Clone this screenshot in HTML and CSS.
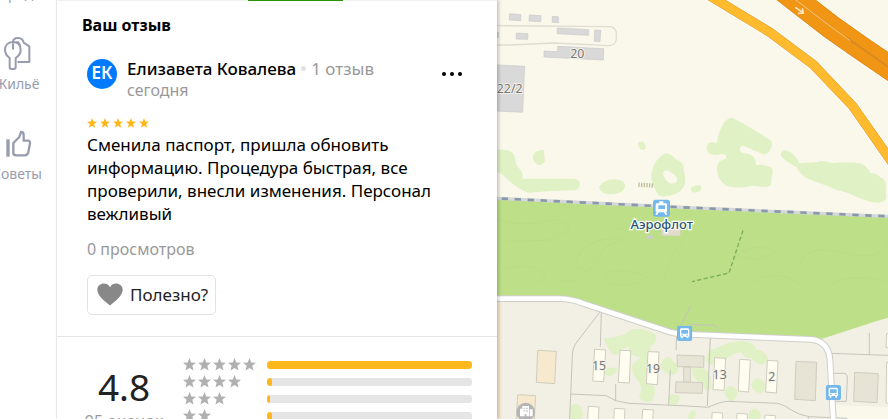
FILE: index.html
```html
<!DOCTYPE html>
<html lang="ru">
<head>
<meta charset="utf-8">
<title>Ваш отзыв</title>
<link rel="stylesheet" href="styles.css">
</head>
<body>
<svg class="defs" aria-hidden="true">
  <symbol id="star" viewBox="0 0 24 24"><path d="M12 0l3.300 8.400 8.700.4-6.800 5.600 2.300 8.800L12 18.300l-7.500 4.900 2.300-8.800L0 8.800l8.700-.4z"/></symbol>
  <symbol id="bus" viewBox="0 0 46 46"><rect width="46" height="46" rx="7" fill="#75b8ec"/><path fill="#fff" fill-rule="evenodd" d="M13 8h20q4 0 4 5v20h-3v5h-5v-5H17v5h-5v-5H9V13q0-5 4-5zm0 5v11h20V13zm0 14v3h5v-3zm15 0v3h5v-3z"/></symbol>
</svg>
<div class="app">
  <nav class="rail">
    <a class="rail-item" href="#"><span>Города</span></a>
    <a class="rail-item" href="#">
      <svg class="rail-icon" viewBox="0 0 96 108" fill="none" stroke="#989caf" stroke-width="6" stroke-linejoin="round" stroke-linecap="round"><path d="M36 23C38 8 65 8 68 26L85 37V84H52"/><path d="M36 24C20 24 12 35 12 48c0 12 6 18 14 24v27q0 6 6 6h6q6 0 6-6V72c9-6 15-12 15-24 0-15-8-24-23-24z"/><path d="M36 30v14M50 24q4 4 7 10"/></svg>
      <span>Жильё</span>
    </a>
    <a class="rail-item" href="#">
      <svg class="rail-icon" viewBox="0 0 96 108" fill="none" stroke="#989caf" stroke-width="7" stroke-linejoin="round"><path d="M21 46v52" stroke-width="10"/><path d="M37 87V57l18-18 5-15q8 0 8 9v17h13q7 0 6 8l-5 27q-2 9-11 9H46q-9 0-9-7z"/></svg>
      <span>Советы</span>
    </a>
  </nav>
  <main class="panel">
    <div class="tabs"><div class="tab-active"></div></div>
    <section class="review">
      <h2>Ваш отзыв</h2>
      <article class="card">
        <header class="author">
          <div class="avatar">ЕК</div>
          <div class="who">
            <div class="name-line"><a class="name" href="#">Елизавета Ковалева</a><i class="dot"></i><span class="muted">1 отзыв</span></div>
            <div class="date">сегодня</div>
          </div>
          <button class="more" type="button" aria-label="Ещё"><i></i><i></i><i></i></button>
        </header>
        <div class="stars">
          <svg><use href="#star"/></svg><svg><use href="#star"/></svg><svg><use href="#star"/></svg><svg><use href="#star"/></svg><svg><use href="#star"/></svg>
        </div>
        <p class="text">Сменила паспорт, пришла обновить информацию. Процедура быстрая, все проверили, внесли изменения. Персонал вежливый</p>
        <div class="views">0 просмотров</div>
        <button class="useful" type="button">
          <svg viewBox="0 0 78 68"><path fill="#888" d="M39 67C25 56 1 39 1 20 1 0 29-6 39 12 49-6 77 0 77 20c0 19-24 36-38 47z"/></svg>
          Полезно?
        </button>
      </article>
    </section>
    <section class="rating">
      <div class="score"><div class="value">4.8</div><div class="count">95 оценок</div></div>
      <div class="rows">
        <div class="row"><div class="row-stars"><svg><use href="#star"/></svg><svg><use href="#star"/></svg><svg><use href="#star"/></svg><svg><use href="#star"/></svg><svg><use href="#star"/></svg></div><div class="bar"><div style="width:100%"></div></div></div>
        <div class="row"><div class="row-stars"><svg><use href="#star"/></svg><svg><use href="#star"/></svg><svg><use href="#star"/></svg><svg><use href="#star"/></svg></div><div class="bar"><div style="width:2.5%"></div></div></div>
        <div class="row"><div class="row-stars"><svg><use href="#star"/></svg><svg><use href="#star"/></svg><svg><use href="#star"/></svg></div><div class="bar"><div style="width:1.5%"></div></div></div>
        <div class="row"><div class="row-stars"><svg><use href="#star"/></svg><svg><use href="#star"/></svg></div><div class="bar"><div style="width:2.5%"></div></div></div>
      </div>
    </section>
  </main>
  <div class="map">
    <svg viewBox="21 0 1173 1257" preserveAspectRatio="xMinYMin slice" role="img" aria-label="Карта">
      <rect x="21" width="1173" height="1257" fill="#faf8ea"/>
      <!-- residential land -->
      <path fill="#f2f0e4" d="M21 890H600L964 1010 1154 965 1194 953V1222L1034 1214 1036 1257H21z"/>
      <path fill="#f5ecd4" d="M21 905h14v352H21z"/>
      <!-- forest -->
      <path fill="#bddf88" d="M21 597L600 623 1194 650V953L1154 965 994 1017 964 1018 600 1003 550 997 270 905 210 897 21 893z"/>
      <g fill="none" stroke="#b3d77e" stroke-width="3" opacity=".4">
        <path d="M30 660q60 20 130 5t80 25l-60 30-130 5M40 810q70-25 110 0t-20 40M190 860q50-40 90 0M255 800q10-60 60-75t90-10q-60 20-70 40t-40 60zM345 820q60-20 130 10-50 40-120 20zM370 690q100-20 180 20M520 850q20-90 60-130M740 765q60-40 120-10-60 40-120 10zM930 790q20-60 140-30t120-50M780 850q100-60 180 30M1010 860q90-50 180-10"/>
      </g>
      <!-- light greenery -->
      <g fill="#e1f1c6">
        <path d="M21 449q50-5 54 25 0 20 17 37 10 15 5 25h155q20 4 17 17 0 15-15 18-60 1-140 7Q75 565 37 523L21 517zM130 465q5-15 32-15 0 20 3 35-10 12-20 10-20-10-15-30zM327 560q20-30 62-20 17 5 16 20-5 20-40 23-35 0-38-23zM444 430q6-10 16-4 10 12 6 20-8 8-15 1-8-8-7-17z"/>
        <path fill-rule="evenodd" d="M484 520q10-45 42-60 18 0 30 17 28 10 25 30 10 40 0 54-15 25-60 29-20 0-25-22-15-20-12-48zm36 5q-4-15 15-13 30 15 26 30-5 12-22 8-15-10-19-25z"/>
        <path d="M602 566q8-13 29-10 8 7-1 18-24 10-28-8zM650 445q0-24 30-16 15-75 46-76 16 5 116 68 8 8 0 25-7 19-24 16l-48-20q-16-10-20 2-2 12 10 16 38 0 38 36 18-6 43 5 10 5 6 20-5 20-3 32-5 10-30 8-20-5-30-3-50 10-78-2-32-25-23-65 8-12 25-15 4-15-13-14-45 10-45-17zM872 462q7-21 34-3 18 18 21 31l55-4q10-8 46 3 60-5 88 3 20 12 24 27 20 0 30 12 25 10 17 45 8 30-20 32-35 0-95-30-30-5-60-20-30-10-65-25-20-15-28-32-49-25-47-39zM1125 600h60q-30 15-60 0z"/>
        <path d="M341 1015q50 0 80-25 40-12 77 15 5 23-18 35 8 20-10 35-20-5-40-8-13-7-13-25-20 0-30 15-20 28-46-42zM344 1120q5-25 36-15 5 10-10 20-20 8-26-5zM425 1100q10-20 20-20 10-15 40-10l-8 70q30 20 10 62-30 10-40-12 15-28-5-50-18-20-17-40zM510 1095q10-25 30-25 10 20 27 25 0 30-27 30-20-3-30-30zM535 1190q15-15 34 0 0 25-20 25-15-3-14-25zM238 1257v-35q20-20 35 0 10 20 2 35z"/>
        <path d="M648 1080q0-30 30-35 50-30 100-18 20 10 20 20 40 10 35 38-25 20-50-10-20 0-30-20-45 15-50 30-30-10-35 10-20-2-20-15zM606 1105h30q30 5 28 60-15 20-24-10-35-15-34-50zM704 1175q12-30 38-5 0 25-15 35-20-5-23-30zM783 1155q10-35 38-10 10 20-5 35-25 0-33-25zM776 1257q-5-30 20-32 20 10 15 32zM594 1257q0-30 22-25 5 12-4 25z"/>
      </g>
      <!-- industrial buildings and drive -->
      <g fill="none" stroke="#deddd2" stroke-width="4"><path d="M21 77l340 3q19 5 18 22v15q-2 20-24 20l-165-8-130 6H21"/></g>
      <g fill="#d9d9d9" stroke="#c8c8c8" stroke-width="2">
        <path d="M59 41l34 3-1 18-34-2zM118 45l35 2-1 18-35-2zM187 49l18 1v18l-18-1zM202 84l94 5v17l-94-5zM314 90l18 1-2 34-17-1zM79 99l35 2-1 17-34-1zM21 97h5v15h-5zM203 139l138 7-1 34-178-9v-18l41 2zM21 195l83 4-6 138-77-4z"/>
      </g>
      <!-- highways -->
      <g fill="none">
        <path stroke="#fff" stroke-width="36" d="M647-20L840 97 970 194 1088 318 1214 498"/>
        <path stroke="#e0a03a" stroke-width="29" d="M647-20L840 97 970 194 1088 318 1214 498"/>
        <path stroke="#ffba2e" stroke-width="26" d="M647-20L840 97 970 194 1088 318 1214 498"/>
        <path stroke="#fff" stroke-width="80" d="M880-30L1022 80 1110 142 1214 213"/>
        <path stroke="#dd8510" stroke-width="73" d="M880-30L1022 80 1110 142 1214 213"/>
        <path stroke="#f19514" stroke-width="69" d="M880-30L1022 80 1110 142 1214 213"/>
        <path stroke="#d98a25" stroke-width="6" d="M1070 113L1194 200"/>
        <path stroke="#edc583" stroke-width="3" d="M914-3L1014 74 1080 122"/>
        <path stroke="#fde7c3" stroke-width="5" d="M916 22l22 15m-1-12l3 14-16 1"/>
      </g>
      <!-- railway -->
      <path fill="none" stroke="#d5d8d8" stroke-width="10" d="M21 595L600 623 1194 649"/>
      <path fill="none" stroke="#8999ab" stroke-width="8" stroke-dasharray="19 20" stroke-dashoffset="25" d="M21 595L600 623 1194 649"/>
      <path stroke="#bdbf9b" stroke-width="13" stroke-dasharray="4 4" d="M445 554l47 3"/>
      <path fill="none" stroke="#79ae5b" stroke-width="4" stroke-dasharray="13 7" d="M759 691L717 819 606 845"/>
      <!-- footpaths -->
      <g fill="none" stroke="#c4c4be" stroke-width="3">
        <path d="M332 933l-75 98q-10 15-10 35l-8 191M334 933l-3 107M241 1182l108 5 28 15 40 8 177 8 60 4q40-18 60-18l150 6q20 5 40 20 25 16 54 20l114 5M377 1152v50M541 1111l-5 105M560 1005l-2 45M572 978l30-60M661 1013l-9 205M600 974l73 2q12 4 12 18M1138 998v66M1021 1060l173 6M1030 1120h30q12 0 12 14l-3 70h-38M955 1250v7"/>
      </g>
      <!-- streets -->
      <g fill="none" stroke-linejoin="round">
        <path stroke="#cfcfca" stroke-width="20" d="M21 896H205Q245 896 285 912L540 996Q560 1002 600 1003L964 1018Q1016 1024 1020 1080L1030 1257"/>
        <path stroke="#fff" stroke-width="14" d="M15 896H205Q245 896 285 912L540 996Q560 1002 600 1003L964 1018Q1016 1024 1020 1080L1030 1262"/>
      </g>
      <!-- houses -->
      <g stroke="#d0cdbf" stroke-width="3">
        <path fill="#fffdf0" d="M314 1048l33 2-6 95-33-2zM390 1051l32 1-4 97-33-2zM474 1055l33 1-5 98-33-3zM295 1219l32 2-2 40h-32zM373 1225l32 2-2 34h-32zM458 1228l32 2-2 31h-32zM674 1073l33 2-5 96-33-2zM749 1078l32 2-5 96-31-3zM832 1081l32 2-5 96-32-3zM667 1237l31 2v22h-33zM741 1240l31 2v19h-32zM825 1245l31 2v14h-32zM1190 1001h10v43l-12-2zM1190 1087h10v124l-12-2z"/>
        <path fill="#e7e3d5" d="M561 1065l81 3-1 34-79-2zM581 1100h20v46h-20zM558 1145l80 3-1 32-81-2zM918 1084l62 3-4 115-62-4zM1094 1117l71 4-4 87-70-4z"/>
        <path fill="#f6e9cd" d="M143 1051l56 3-5 97-55-4zM83 1184l54 3-4 74H79z"/>
      </g>
      <g fill="#e3dccd" stroke="#cfcbbd"><path d="M515 684h56v23h-55z"/><path fill="#cbd0cd" d="M470 707h19v9h-19z"/></g>
      <circle cx="107" cy="1236" r="28" fill="#b5b5b5"/>
      <path fill="#fff" fill-rule="evenodd" d="M90 1249v-23h7v-8h20v31h-8v-7h-5v7zM119 1228h9v21h-9zM101 1223v4h3v-4zm8 0v4h4v-4zm-8 8v4h3v-4zm8 0v4h4v-4z"/>
      <use href="#bus" x="561" y="977" width="46" height="46"/>
      <use href="#bus" x="1007" y="1155" width="46" height="46"/>
      <rect x="489" y="599" width="51" height="51" rx="8" fill="#75b8ec"/>
      <path fill="#fff" fill-rule="evenodd" d="M508 604h12v6h8q3 0 3 5v20h-3l4 9h-6l-4-7h-16l-4 7h-6l4-9h-3v-20q0-5 3-5h8zm-3 12v11h20v-11z"/>
      <g class="house-no" text-anchor="middle">
        <text x="262" y="173">20</text><text x="59" y="280">22/2</text><text x="327" y="1110">15</text><text x="489" y="1118">19</text><text x="689" y="1136">13</text><text x="845" y="1144">2</text>
      </g>
      <text class="station" x="515" y="686" text-anchor="middle">Аэрофлот</text>
    </svg>
  </div>
</div>
</body>
</html>
```

FILE: styles.css
```css
* { box-sizing: border-box; }
body {
  margin: 0;
  overflow: hidden;
  background: #fff;
  color: #000;
  font: 17px/23px "Noto Sans", sans-serif;
}
h2, p { margin: 0; }
a { color: inherit; text-decoration: none; }
button { font: inherit; background: none; border: 0; padding: 0; cursor: pointer; }
.defs { display: none; }
.app { display: flex; height: 100vh; overflow: hidden; }

.rail {
  flex: 0 0 78px;
  margin: -14px 0 0 -22px;
  display: flex;
  flex-direction: column;
  gap: 18px;
}
.rail-item {
  display: flex;
  flex-direction: column;
  align-items: center;
  padding-bottom: 14px;
  color: #989caf;
  font-size: 14px;
  line-height: 16px;
}
.rail-icon { width: 32px; height: 36px; margin-bottom: 6px; }

.panel {
  flex: 0 0 441px;
  border-left: 1px solid #e8e8e8;
  background: #fff;
  position: relative;
  z-index: 1;
  box-shadow: 2px 0 3px rgba(0, 0, 0, .2);
}
.tabs { height: 1px; background: #f0f0f0; padding-left: 191px; }
.tab-active { width: 95px; height: 1px; background: #299400; }
.review { padding: 13px 25px 21px; border-bottom: 1px solid #e5e5e5; }
h2 { font-size: 16px; line-height: 23px; font-weight: 700; }
.card { padding: 20px 5px 0; }
.author { display: flex; }
.avatar {
  width: 30px;
  height: 30px;
  margin: 2px 10px 0 0;
  border-radius: 50%;
  background: #007aff;
  color: #fff;
  font-size: 17px;
  font-weight: 600;
  line-height: 27px;
  text-align: center;
}
.name-line { display: flex; align-items: center; line-height: 23px; }
.name { font-weight: 500; }
.dot { width: 5px; height: 5px; margin: 0 5px; border-radius: 50%; background: #e2e2e2; }
.muted, .date, .views, .count { color: #999; }
.date { font-size: 16px; line-height: 20px; }
.more { display: flex; gap: 4px; margin-left: auto; padding: 10px 5px; align-items: center; height: 34px; }
.more i { width: 4px; height: 4px; border-radius: 50%; background: #000; }
.stars { display: flex; gap: 3px; margin: 18px 0 5px; fill: #ffb81c; }
.stars svg { width: 10px; height: 10px; }
.views { margin-top: 13px; font-size: 16px; }
.useful {
  display: flex;
  align-items: center;
  gap: 7px;
  height: 40px;
  margin-top: 14px;
  padding: 0 7px 2px 9px;
  border: 1px solid #e2e2e2;
  border-radius: 5px;
  color: #222;
}
.useful svg { width: 26px; height: 23px; }

.rating { display: flex; padding: 19px 25px 0; }
.score { flex: 0 0 84px; margin-right: 17px; text-align: center; white-space: nowrap; }
.value { margin-top: 8px; font-size: 37px; line-height: 46px; color: #222; }
.count { font-size: 16px; }
.rows { flex: 1; }
.row { display: flex; align-items: center; height: 17px; }
.row-stars { display: flex; gap: 2px; width: 84px; fill: #b0b0b0; }
.row-stars svg { width: 13px; height: 13px; }
.bar { flex: 1; height: 8px; border-radius: 3px; background: #e5e5e5; overflow: hidden; }
.bar div { height: 100%; border-radius: 3px; background: #ffb81c; }

.map { flex: 1; min-width: 0; background: #faf8ea; }
.map svg { display: block; width: 100%; height: 100%; }
.house-no { font-size: 37px; fill: #777; stroke: #f4f2ea; stroke-width: 6px; paint-order: stroke; }
.station { font-size: 39px; font-weight: 500; fill: #2c5670; stroke: #fff; stroke-width: 7px; paint-order: stroke; }
```
